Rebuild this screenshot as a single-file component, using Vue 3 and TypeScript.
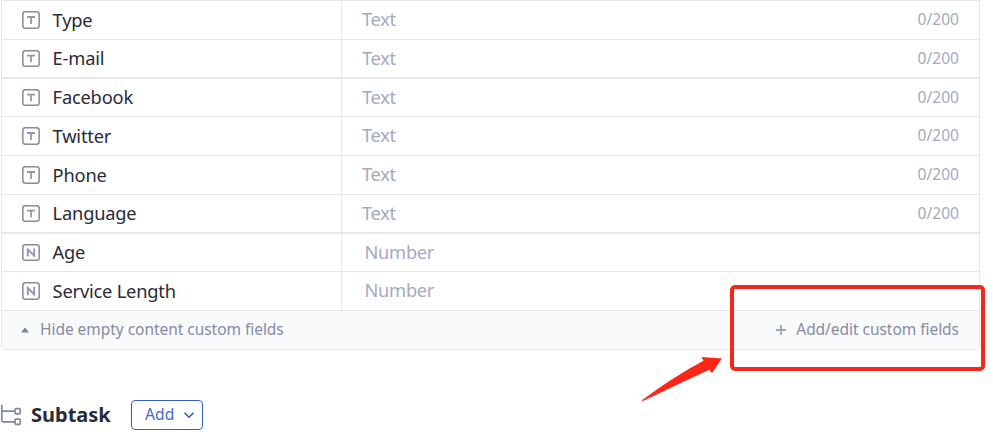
<script setup lang="ts">
interface Field {
  name: string
  kind: 'text' | 'number'
  compact?: boolean
  strong?: boolean
}

const fields: Field[] = [
  { name: 'Type', kind: 'text' },
  { name: 'E-mail', kind: 'text', compact: true },
  { name: 'Facebook', kind: 'text', strong: true },
  { name: 'Twitter', kind: 'text' },
  { name: 'Phone', kind: 'text' },
  { name: 'Language', kind: 'text', compact: true },
  { name: 'Age', kind: 'number', strong: true },
  { name: 'Service Length', kind: 'number' },
]
</script>

<template>
  <main class="page">
    <section class="fields">
      <div
        v-for="field in fields"
        :key="field.name"
        class="row"
        :class="{ compact: field.compact, strong: field.strong }"
      >
        <div class="label">
          <svg class="kind" viewBox="0 0 18 18" fill="none" preserveAspectRatio="none">
            <rect x="0.85" y="0.85" width="16.3" height="16.3" rx="2.4" stroke="#858ca0" stroke-width="1.5" />
            <path v-if="field.kind === 'text'" d="M5 6h8M9 6v7" stroke="#9299aa" stroke-width="1.8" />
            <path v-else d="M5.8 13.3V5.8L12.2 12.4V4.8" stroke="#9299aa" stroke-width="1.9" />
          </svg>
          <span class="name">{{ field.name }}</span>
        </div>
        <div class="value" :class="field.kind">
          <span class="placeholder">{{ field.kind === 'text' ? 'Text' : 'Number' }}</span>
          <span v-if="field.kind === 'text'" class="count">0/200</span>
        </div>
      </div>
      <div class="footer">
        <div class="toggle">
          <svg class="caret" viewBox="0 0 10 6"><path d="M1 5.6 4.5 1q.5-.6 1 0L9 5.6Z" fill="#7b8499" /></svg>
          <span class="hide">Hide empty content custom fields</span>
        </div>
        <div class="edit">
          <svg class="plus" viewBox="0 0 12 12"><path d="M1 6h10M6 1v10" stroke="#a0a6b5" stroke-width="1.8" /></svg>
          <span class="manage">Add/edit custom fields</span>
        </div>
      </div>
    </section>

    <section class="subtask">
      <svg class="tree" viewBox="0 0 22 22" fill="none" stroke="#81899b" stroke-width="1.7">
        <path d="M1.8 .8v15.2q0 1.8 1.8 1.8H15M2 7.2h13" />
        <rect x="15" y="4.6" width="5.2" height="5.2" rx="1" />
        <rect x="15" y="15.1" width="5.2" height="5.2" rx="1" />
      </svg>
      <h2 class="title">Subtask</h2>
      <button class="add" type="button">
        <span class="add-text">Add</span>
        <svg class="chevron" viewBox="0 0 12 8" fill="none"><path d="m1.5 1.7 4.5 4.5 4.5-4.5" stroke="#315fc4" stroke-width="1.6" /></svg>
      </button>
    </section>

    <div class="highlight"></div>
    <svg class="arrow" viewBox="0 0 82 48">
      <path d="M1 45.3Q32 22 62.5 5.8L60.5 2 81 3.4 71 18 68.2 14.7Q35 30 1.5 46.2Z" fill="#fd2418" />
    </svg>
  </main>
</template>

<style>
body {
  background: #fff;
}
</style>

<style scoped>
.page {
  position: relative;
  width: 993px;
  height: 445px;
  overflow: hidden;
  font-family: "Noto Sans", "Open Sans", sans-serif;
  color: #292b38;
}
.fields {
  box-sizing: border-box;
  width: 979px;
  height: 350px;
  margin-left: 1px;
  border: 1px solid #e5e7ec;
  border-top: 0;
  border-radius: 0 0 5px 5px;
  overflow: hidden;
}
.row {
  box-sizing: border-box;
  display: flex;
  height: 39px;
  border-top: 1px solid #e5e7ec;
}
.row.compact {
  height: 38px;
}
.row.strong {
  border-top-width: 2px;
}
.label {
  box-sizing: border-box;
  display: flex;
  align-items: center;
  width: 340px;
  padding-left: 20px;
  border-right: 1px solid #e5e7ec;
}
.kind {
  width: 18px;
  height: 18px;
}
.compact .kind,
.strong .kind {
  height: 17px;
}
.name {
  margin-left: 12.6px;
  font-size: 18.3px;
  font-weight: 380;
  letter-spacing: -0.2px;
  line-height: 24px;
}
.compact .name,
.strong .name {
  padding-bottom: 1px;
}
.value {
  display: flex;
  flex: 1;
  align-items: center;
  justify-content: space-between;
  padding: 0 20px 2px;
  color: #a4abbd;
}
.value.number {
  padding-left: 22.5px;
}
.placeholder {
  font-size: 18.3px;
  letter-spacing: -0.3px;
  line-height: 24px;
}
.count {
  font-size: 15.6px;
  line-height: 20px;
}
.footer {
  box-sizing: border-box;
  display: flex;
  align-items: center;
  justify-content: space-between;
  height: 39px;
  padding: 0 20px 0 18px;
  border-top: 1px solid #e5e7ec;
  background: #f9fafc;
  color: #858c9f;
  font-size: 15.5px;
  letter-spacing: -0.04px;
  line-height: 20px;
}
.toggle,
.edit {
  display: flex;
  align-items: center;
}
.hide,
.manage {
  padding-bottom: 2px;
}
.caret {
  width: 10px;
  height: 6px;
  margin-right: 10px;
}
.plus {
  width: 12px;
  height: 12px;
  margin-right: 9.5px;
}
.subtask {
  display: flex;
  align-items: center;
  height: 30px;
  margin-top: 50px;
}
.tree {
  width: 22px;
  height: 22px;
}
.title {
  width: 100px;
  margin: 0 0 0 9px;
  font-size: 20px;
  font-weight: 700;
  line-height: 28px;
}
.add {
  box-sizing: border-box;
  display: flex;
  align-items: center;
  justify-content: space-between;
  width: 72px;
  height: 30px;
  padding: 0 7px 0 13px;
  border: 1px solid #315fc4;
  border-radius: 4px;
  background: #fff;
  color: #4268cb;
  font-family: inherit;
  font-size: 15.7px;
}
.add-text {
  padding-bottom: 2px;
}
.chevron {
  width: 12px;
  height: 8px;
}
.highlight {
  position: absolute;
  box-sizing: border-box;
  left: 730px;
  top: 285px;
  width: 255px;
  height: 86px;
  border: 4px solid #f3271b;
  border-radius: 5px;
}
.arrow {
  position: absolute;
  left: 641px;
  top: 355px;
  width: 82px;
  height: 48px;
}
</style>
